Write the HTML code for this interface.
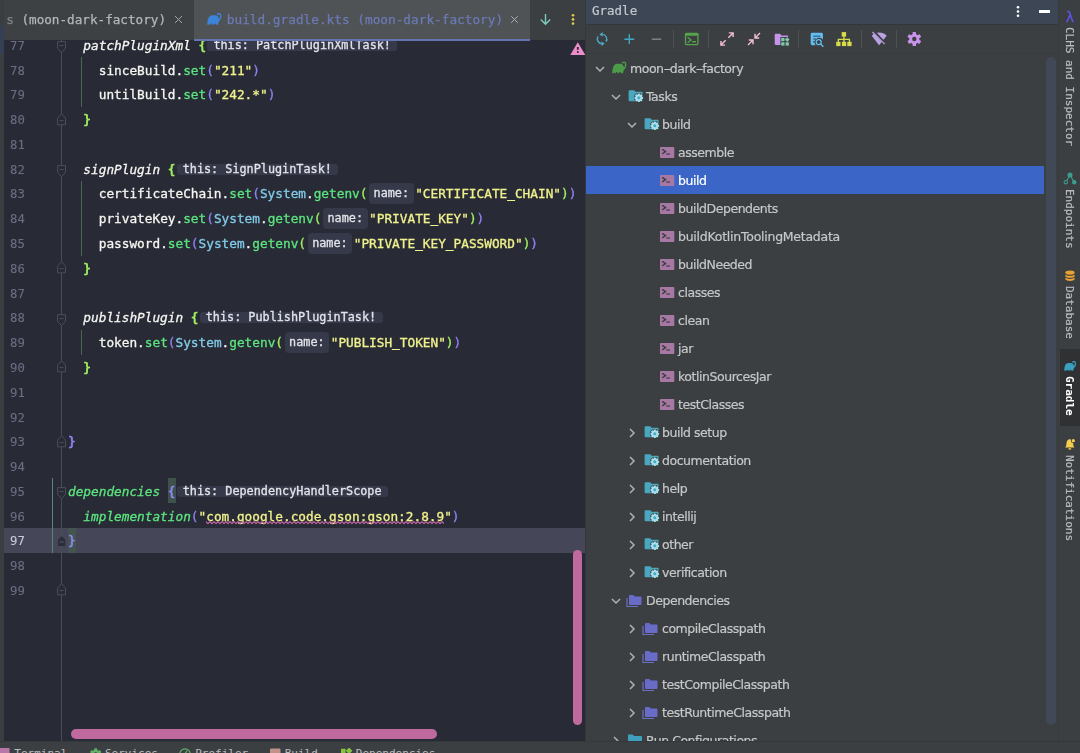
<!DOCTYPE html>
<html lang="en">
<head>
<meta charset="utf-8">
<title>build.gradle.kts (moon-dark-factory)</title>
<style>
*{box-sizing:border-box;margin:0;padding:0}
html,body{width:1080px;height:753px;overflow:hidden;background:#282a36}
body{position:relative;font-family:"DejaVu Sans Mono","Liberation Mono",monospace}
.abs{position:absolute}
#lstrip{left:0;top:0;width:4.2px;height:741px;background:#3b3e40}
#lsel{left:0;top:24.5px;width:3.5px;height:29px;background:#353f54;border-radius:0 3px 3px 0}
#tabs{will-change:transform;left:4px;top:0;width:582px;height:40px;background:#3c3f41}
.tab{-webkit-text-stroke:0.25px;position:absolute;top:0;height:40px;font-size:12.75px;line-height:40px;white-space:pre}
#tab1{left:0;width:190px;background:#3e4143;color:#b3b7bb}
#tab1>span{position:absolute;left:2.2px;top:0;font-size:12.65px}
#tab2{left:190px;width:335.5px;height:39px;background:#4f5355;color:#6b7ab5}
#tab2 span{position:absolute;left:32.8px;top:0.2px}
#tabul{left:194px;top:38.8px;width:335.5px;height:2px;background:#6573b1}
#code{will-change:transform;left:0;top:0;width:586px;height:741px;clip-path:inset(40.8px 0 0 0)}
.ln{-webkit-text-stroke:0.1px;position:absolute;left:10px;width:20px;height:25px;line-height:25px;font-size:12.3px;color:#6b6e82;white-space:pre}
.ln.cur{color:#c9cbd6}
.cl{-webkit-text-stroke:0.3px;position:absolute;left:68px;height:25px;line-height:25px;font-size:12.75px;white-space:pre;color:#f8f8f2}
.i{font-style:italic}
.br{-webkit-text-stroke:0.7px}
.w{color:#f6f6f1}.g{color:#5ce57f}.y{color:#f0f28c}.p{color:#8e84f4}.c{color:#82cbe8}.l{color:#a0f060}
.hint{display:inline-block;position:relative;top:-1.2px;height:21px;line-height:21px;font-size:11.8px;color:#e3e4ea;background:#363949;border-radius:4px;padding:0 4.6px;margin:0 1.5px;vertical-align:middle}
.hint.flat{height:11.6px;line-height:10.6px;border-radius:3px;padding:0 6.5px 0 6px;margin:0 0 0 1.2px;top:-1.2px}
.sq{text-decoration:underline wavy #c4508e 1px;text-underline-offset:2.5px}
.mb{background:#3e514b;display:inline-block;height:24.77px}
.mb2{background:#44554f;display:inline-block;height:24.77px}
#curline{left:4px;top:528px;width:582px;height:24.8px;background:#454759}
.foldline{left:61px;top:40px;width:1px;height:701px;background:#494b58}
.guide{width:1px;background:#4a6650}
#vcs{left:52px;top:478.4px;width:1.2px;height:74.4px;background:#5f8474}
.fm{position:absolute;left:57px}
#vsb{left:573.1px;top:550.4px;width:9px;height:174.2px;border-radius:4.5px;background:#c0699f}
#hsb{left:70.5px;top:729px;width:366px;height:9.6px;border-radius:5px;background:#c0699f}
#gradlebg{left:586px;top:0;width:473px;height:741px;background:#3c3f41}
#gradle{will-change:transform;left:586px;top:0;width:473px;height:741px;overflow:hidden}
#ghead{-webkit-text-stroke:0.2px;left:0;top:0;width:473px;height:23.5px;background:#3d4654;color:#c5c9ce;font-size:12.5px;line-height:22px;padding-left:6px}
#gline{left:0;top:23.5px;width:473px;height:1px;background:#34373a}
#gline2{left:0;top:53px;width:473px;height:1px;background:#393c3e}
.tsep{position:absolute;top:30px;width:1px;height:18px;background:#4e5153}
.tb{position:absolute}
.row{position:absolute;left:0;width:458px;height:28px}
.row.sel{background:#3b65c6}
.row .arr{position:absolute;top:9.5px}
.row .ti{position:absolute;top:50%;transform:translateY(-50%)}
.tt{-webkit-text-stroke:0.2px;position:absolute;top:0.5px;line-height:28px;font-family:"DejaVu Sans","Liberation Sans",sans-serif;font-size:12.5px;letter-spacing:-0.45px;color:#c6c8ca;white-space:pre}
.row.sel .tt{color:#fff}
.hy{display:inline-block;transform:scaleX(1.8);margin:0 1.1px}
#tsb{left:460px;top:56.5px;width:9.6px;height:668px;border-radius:5px;background:#414957}
#rstripebg{left:1058px;top:0;width:22px;height:741px;background:#3c3f41;border-left:1px solid #383b3d}
#rstripe{will-change:transform;left:1059.5px;top:0;width:20.5px;height:741px}
#rsel{left:0;top:349px;width:21px;height:76.5px;background:#2f3133}
.vt{-webkit-text-stroke:0.2px;position:absolute;left:-1.1px;width:21px;writing-mode:vertical-rl;font-size:11px;color:#b9bcc0;white-space:pre;line-height:21px}
.si{position:absolute}
#bottom{left:0;top:741px;width:1080px;height:12px;background:#3c3f41;border-top:1px solid #35383a;overflow:hidden}
.bt{position:absolute;top:5.4px;font-size:11px;line-height:14px;color:#b9bcc0;white-space:pre}
.bi{position:absolute;top:6px}
</style>
</head>
<body>
<svg width="0" height="0" style="position:absolute">
<defs>
<g id="i-gradle"><path d="M0.300 11.800C0.200 9 0.700 6 1.900 4.200C2.700 2.900 4 2.300 6 2.300H8C10 2.300 11.200 3.200 11.700 5L12.400 7.600C12 9 11.200 9.600 11.100 11.800H8.900C8.900 10.200 7.100 10.200 7.100 11.800H5.700C5.700 10.200 3.900 10.200 3.900 11.800H3.100C3.100 10.600 2 10.600 2 11.800Z"/><path d="M11.300 7.800C13.200 6.300 14 3.800 13.500 1.900C13.100 0.300 11.200 0.100 10.600 1.400" fill="none" stroke="currentColor" stroke-width="1.500" stroke-linecap="round"/></g>
<g id="i-tfolder"><path d="M0.600 2.400c0-.7.500-1.200 1.200-1.200H5.600c.500 0 .900.200 1.200.600l.800 1H13.500c.700 0 1.200.500 1.200 1.200V11.100c0 .700-.500 1.200-1.200 1.200H1.800c-.700 0-1.200-.500-1.200-1.200z" fill="#49a8c0"/><g transform="translate(10.800 8.800)"><circle r="4.900" fill="#3c3f41"/><g fill="#a3e1ee"><rect x="-1.100" y="-4.300" width="2.200" height="8.600" rx="0.300" transform="rotate(0)"/><rect x="-1.100" y="-4.300" width="2.200" height="8.600" rx="0.300" transform="rotate(45)"/><rect x="-1.100" y="-4.300" width="2.200" height="8.600" rx="0.300" transform="rotate(90)"/><rect x="-1.100" y="-4.300" width="2.200" height="8.600" rx="0.300" transform="rotate(135)"/><circle r="3.300"/></g><circle r="1.500" fill="#49a8c0"/></g></g>
<g id="i-task"><rect x="0" y="0" width="14.300" height="11.100" rx="0.800" fill="#a878a4"/><path d="M2.200 2.300L5.600 4.600L2.200 6.900" fill="none" stroke="#3c3f41" stroke-width="1.400"/><rect x="6.200" y="6.400" width="3.700" height="1.200" fill="#3c3f41"/></g>
<g id="i-lib"><path d="M1 4v8.500h11" fill="none" stroke="#6a6fc4" stroke-width="1.200"/><path d="M3 2c0-.6.400-1 1-1h3.300l1.300 1.500H14.500c.6 0 1 .4 1 1V10c0 .6-.4 1-1 1H4c-.6 0-1-.4-1-1z" fill="#686cc6"/></g>
<g id="i-runcfg"><path d="M1 2.500c0-.6.400-1 1-1h3.600l1.500 1.500H14c.6 0 1 .4 1 1V11c0 .6-.4 1-1 1H2c-.6 0-1-.4-1-1z" fill="#3f9fbc"/></g>
</defs>
</svg>

<div id="lstrip" class="abs"></div>
<div id="lsel" class="abs"></div>
<div id="curline" class="abs"></div>
<div class="foldline abs"></div>
<div id="vcs" class="abs"></div>
<div id="code" class="abs">
<svg class="fm" style="top:41.10px" width="10" height="13" viewBox="0 0 10 13"><path d="M0.600 0.600H8.500V7.200L4.550 11.800L0.600 7.200Z" fill="#282a36" stroke="#4c4e5b" stroke-width="1"/><path d="M2.500 4.600H6.600" stroke="#4c4e5b" stroke-width="1"/></svg>
<svg class="fm" style="top:164.95px" width="10" height="13" viewBox="0 0 10 13"><path d="M0.600 0.600H8.500V7.200L4.550 11.800L0.600 7.200Z" fill="#282a36" stroke="#4c4e5b" stroke-width="1"/><path d="M2.500 4.600H6.600" stroke="#4c4e5b" stroke-width="1"/></svg>
<svg class="fm" style="top:313.57px" width="10" height="13" viewBox="0 0 10 13"><path d="M0.600 0.600H8.500V7.200L4.550 11.800L0.600 7.200Z" fill="#282a36" stroke="#4c4e5b" stroke-width="1"/><path d="M2.500 4.600H6.600" stroke="#4c4e5b" stroke-width="1"/></svg>
<svg class="fm" style="top:486.96px" width="10" height="13" viewBox="0 0 10 13"><path d="M0.600 0.600H8.500V7.200L4.550 11.800L0.600 7.200Z" fill="#282a36" stroke="#4c4e5b" stroke-width="1"/><path d="M2.500 4.600H6.600" stroke="#4c4e5b" stroke-width="1"/></svg>
<svg class="fm" style="top:112.51px" width="10" height="13" viewBox="0 0 10 13"><path d="M0.600 11.800H8.500V5.200L4.550 0.600L0.600 5.200Z" fill="#282a36" stroke="#4c4e5b" stroke-width="1"/><path d="M2.500 7.600H6.600" stroke="#4c4e5b" stroke-width="1"/></svg>
<svg class="fm" style="top:261.13px" width="10" height="13" viewBox="0 0 10 13"><path d="M0.600 11.800H8.500V5.200L4.550 0.600L0.600 5.200Z" fill="#282a36" stroke="#4c4e5b" stroke-width="1"/><path d="M2.500 7.600H6.600" stroke="#4c4e5b" stroke-width="1"/></svg>
<svg class="fm" style="top:360.21px" width="10" height="13" viewBox="0 0 10 13"><path d="M0.600 11.800H8.500V5.200L4.550 0.600L0.600 5.200Z" fill="#282a36" stroke="#4c4e5b" stroke-width="1"/><path d="M2.500 7.600H6.600" stroke="#4c4e5b" stroke-width="1"/></svg>
<svg class="fm" style="top:434.52px" width="10" height="13" viewBox="0 0 10 13"><path d="M0.600 11.800H8.500V5.200L4.550 0.600L0.600 5.200Z" fill="#282a36" stroke="#4c4e5b" stroke-width="1"/><path d="M2.500 7.600H6.600" stroke="#4c4e5b" stroke-width="1"/></svg>
<svg class="fm" style="top:583.14px" width="10" height="13" viewBox="0 0 10 13"><path d="M0.600 11.800H8.500V5.200L4.550 0.600L0.600 5.200Z" fill="#282a36" stroke="#4c4e5b" stroke-width="1"/><path d="M2.500 7.600H6.600" stroke="#4c4e5b" stroke-width="1"/></svg>
<svg class="fm" style="top:534.50px" width="10" height="13" viewBox="0 0 10 13"><path d="M1 10.900H8.300V5L4.650 1L1 5Z" fill="#2b2d39"/><path d="M2.400 7H6.900" stroke="#555766" stroke-width="1"/></svg>
<div class="guide abs" style="left:81px;top:57.38px;height:49.54px"></div>
<div class="guide abs" style="left:81px;top:181.24px;height:74.31px"></div>
<div class="guide abs" style="left:81px;top:329.86px;height:24.77px"></div>
<div class="abs" style="left:167.8px;top:478.48px;width:8.1px;height:24.77px;background:#3e514b"></div>
<div class="abs" style="left:67.9px;top:528.01px;width:8px;height:24.77px;background:#44554f"></div>
<div class="ln" style="top:34.00px">77</div>
<div class="cl" style="top:33.00px">  <span class="w i">patchPluginXml</span> <span class="l br">{</span><span class="hint flat">this: PatchPluginXmlTask!</span></div>
<div class="ln" style="top:59.00px">78</div>
<div class="cl" style="top:58.00px">    <span class="w">sinceBuild.</span><span class="g">set</span><span class="p">(</span><span class="y">"211"</span><span class="p">)</span></div>
<div class="ln" style="top:83.00px">79</div>
<div class="cl" style="top:82.00px">    <span class="w">untilBuild.</span><span class="g">set</span><span class="p">(</span><span class="y">"242.*"</span><span class="p">)</span></div>
<div class="ln" style="top:108.00px">80</div>
<div class="cl" style="top:107.00px">  <span class="l br">}</span></div>
<div class="ln" style="top:133.00px">81</div>
<div class="ln" style="top:158.00px">82</div>
<div class="cl" style="top:157.00px">  <span class="w i">signPlugin</span> <span class="l br">{</span><span class="hint flat">this: SignPluginTask!</span></div>
<div class="ln" style="top:182.00px">83</div>
<div class="cl" style="top:181.00px">    <span class="w">certificateChain.</span><span class="g">set</span><span class="p">(</span><span class="c">System</span><span class="w">.</span><span class="g">getenv</span><span class="l">(</span><span class="hint">name:</span><span class="y">"CERTIFICATE_CHAIN"</span><span class="l">)</span><span class="p">)</span></div>
<div class="ln" style="top:207.00px">84</div>
<div class="cl" style="top:206.00px">    <span class="w">privateKey.</span><span class="g">set</span><span class="p">(</span><span class="c">System</span><span class="w">.</span><span class="g">getenv</span><span class="l">(</span><span class="hint">name:</span><span class="y">"PRIVATE_KEY"</span><span class="l">)</span><span class="p">)</span></div>
<div class="ln" style="top:232.00px">85</div>
<div class="cl" style="top:231.00px">    <span class="w">password.</span><span class="g">set</span><span class="p">(</span><span class="c">System</span><span class="w">.</span><span class="g">getenv</span><span class="l">(</span><span class="hint">name:</span><span class="y">"PRIVATE_KEY_PASSWORD"</span><span class="l">)</span><span class="p">)</span></div>
<div class="ln" style="top:257.00px">86</div>
<div class="cl" style="top:256.00px">  <span class="l br">}</span></div>
<div class="ln" style="top:282.00px">87</div>
<div class="ln" style="top:306.00px">88</div>
<div class="cl" style="top:305.00px">  <span class="w i">publishPlugin</span> <span class="l br">{</span><span class="hint flat">this: PublishPluginTask!</span></div>
<div class="ln" style="top:331.00px">89</div>
<div class="cl" style="top:330.00px">    <span class="w">token.</span><span class="g">set</span><span class="p">(</span><span class="c">System</span><span class="w">.</span><span class="g">getenv</span><span class="l">(</span><span class="hint">name:</span><span class="y">"PUBLISH_TOKEN"</span><span class="l">)</span><span class="p">)</span></div>
<div class="ln" style="top:356.00px">90</div>
<div class="cl" style="top:355.00px">  <span class="l br">}</span></div>
<div class="ln" style="top:381.00px">91</div>
<div class="ln" style="top:406.00px">92</div>
<div class="ln" style="top:430.00px">93</div>
<div class="cl" style="top:429.00px"><span class="p br">}</span></div>
<div class="ln" style="top:455.00px">94</div>
<div class="ln" style="top:480.00px">95</div>
<div class="cl" style="top:479.00px"><span class="g i">dependencies</span> <span class="p br">{</span><span class="hint flat">this: DependencyHandlerScope</span></div>
<div class="ln" style="top:505.00px">96</div>
<div class="cl" style="top:504.00px">  <span class="g i">implementation</span><span class="p">(</span><span class="y">"</span><span class="y">com.google.code.gson:gson:2.8.9</span><span class="y">"</span><span class="p">)</span></div>
<div class="ln cur" style="top:529.00px">97</div>
<div class="cl" style="top:528.00px"><span class="p br">}</span></div>
<div class="ln" style="top:554.00px">98</div>
<div class="ln" style="top:579.00px">99</div>
<svg class="abs" style="left:206.2px;top:521.0px" width="238" height="4" viewBox="0 0 238 4"><polyline points="0.0,0.6 2.0,2.6 4.0,0.6 6.0,2.6 8.0,0.6 10.0,2.6 12.0,0.6 14.0,2.6 16.0,0.6 18.0,2.6 20.0,0.6 22.0,2.6 24.0,0.6 26.0,2.6 28.0,0.6 30.0,2.6 32.0,0.6 34.0,2.6 36.0,0.6 38.0,2.6 40.0,0.6 42.0,2.6 44.0,0.6 46.0,2.6 48.0,0.6 50.0,2.6 52.0,0.6 54.0,2.6 56.0,0.6 58.0,2.6 60.0,0.6 62.0,2.6 64.0,0.6 66.0,2.6 68.0,0.6 70.0,2.6 72.0,0.6 74.0,2.6 76.0,0.6 78.0,2.6 80.0,0.6 82.0,2.6 84.0,0.6 86.0,2.6 88.0,0.6 90.0,2.6 92.0,0.6 94.0,2.6 96.0,0.6 98.0,2.6 100.0,0.6 102.0,2.6 104.0,0.6 106.0,2.6 108.0,0.6 110.0,2.6 112.0,0.6 114.0,2.6 116.0,0.6 118.0,2.6 120.0,0.6 122.0,2.6 124.0,0.6 126.0,2.6 128.0,0.6 130.0,2.6 132.0,0.6 134.0,2.6 136.0,0.6 138.0,2.6 140.0,0.6 142.0,2.6 144.0,0.6 146.0,2.6 148.0,0.6 150.0,2.6 152.0,0.6 154.0,2.6 156.0,0.6 158.0,2.6 160.0,0.6 162.0,2.6 164.0,0.6 166.0,2.6 168.0,0.6 170.0,2.6 172.0,0.6 174.0,2.6 176.0,0.6 178.0,2.6 180.0,0.6 182.0,2.6 184.0,0.6 186.0,2.6 188.0,0.6 190.0,2.6 192.0,0.6 194.0,2.6 196.0,0.6 198.0,2.6 200.0,0.6 202.0,2.6 204.0,0.6 206.0,2.6 208.0,0.6 210.0,2.6 212.0,0.6 214.0,2.6 216.0,0.6 218.0,2.6 220.0,0.6 222.0,2.6 224.0,0.6 226.0,2.6 228.0,0.6 230.0,2.6 232.0,0.6 234.0,2.6 236.0,0.6 238.0,2.6" fill="none" stroke="#cd6aac" stroke-width="1.1" stroke-linejoin="round"/></svg>
</div>
<div id="tabs" class="abs">
  <div id="tab1" class="tab"><span><span style="opacity:.55">s</span> (moon-dark-factory)</span>
    <svg class="abs" style="left:169.800px;top:15px" width="9" height="9" viewBox="0 0 9 9"><path d="M1 1L8 8M8 1L1 8" stroke="#a1a5a9" stroke-width="1" fill="none"/></svg>
  </div>
  <div id="tab2" class="tab">
    <svg class="abs" style="left:12.5px;top:13.2px;color:#3b84d9" width="15" height="13" viewBox="0 0 15 13"><use href="#i-gradle" fill="#3b84d9"/></svg>
    <span>build.gradle.kts (moon-dark-factory)</span>
    <svg class="abs" style="left:316px;top:14.800px" width="9" height="9" viewBox="0 0 9 9"><path d="M1.300 1.300L7.700 7.700M7.700 1.300L1.300 7.700" stroke="#aeb2b6" stroke-width="1" fill="none"/></svg>
  </div>
  <svg class="abs" style="left:535px;top:13px" width="13" height="13" viewBox="0 0 13 13"><path d="M6.500 1V11M1.800 6.500L6.500 11.200L11.200 6.500" stroke="#7accbc" stroke-width="1.400" fill="none"/></svg>
  <svg class="abs" style="left:566px;top:13px" width="6" height="13" viewBox="0 0 6 13"><circle cx="3" cy="2.200" r="1.300" fill="#e6cf45"/><circle cx="3" cy="6.400" r="1.300" fill="#e6cf45"/><circle cx="3" cy="10.600" r="1.300" fill="#e6cf45"/></svg>
</div>
<div id="tabul" class="abs"></div>
<svg class="abs" style="left:569.500px;top:42px" width="16" height="14" viewBox="0 0 16 14"><path d="M7.800 0.200L15.300 13H0.300Z" fill="#ee8ccc"/><path d="M7.800 5V7.800" stroke="#2d2530" stroke-width="1.800"/><rect x="6.900" y="9.200" width="1.800" height="1.600" fill="#2d2530"/></svg>
<div class="abs" style="left:585.2px;top:0;width:1px;height:741px;background:#34373b"></div>
<div id="vsb" class="abs"></div>
<div id="hsb" class="abs"></div>

<div id="gradlebg" class="abs"></div>
<div id="gradle" class="abs">
  <div id="ghead" class="abs">Gradle</div>
  <svg class="abs" style="left:429px;top:5px" width="6" height="13" viewBox="0 0 6 13"><circle cx="3" cy="2.300" r="1.300" fill="#fff"/><circle cx="3" cy="6.500" r="1.300" fill="#fff"/><circle cx="3" cy="10.700" r="1.300" fill="#fff"/></svg>
  <div class="abs" style="left:453px;top:9.700px;width:11.200px;height:3.200px;background:#fff;border-radius:0.500px"></div>
  <div id="gline" class="abs"></div>
  <div id="gline2" class="abs"></div>
<svg class="abs" style="left:8.0px;top:31.0px" width="16" height="16" viewBox="0 0 16 16"><g fill="none" stroke="#4aa9c3" stroke-width="1.4"><path d="M12 10.700 A4.700 4.700 0 0 0 8.300 3.400"/><path d="M4.100 5.400 A4.700 4.700 0 0 0 7.800 12.700"/></g><path d="M8.600 1V5.800L5.400 3.400Z M7.500 10.300V15.100L10.700 12.700Z" fill="#4aa9c3"/></svg>
<svg class="abs" style="left:38.0px;top:34.0px" width="11" height="11" viewBox="0 0 11 11"><path d="M5.3 0.3V10.1M0.4 5.2H10.2" stroke="#3fa8c7" stroke-width="1.4" fill="none"/></svg>
<svg class="abs" style="left:65.0px;top:37.0px" width="11" height="4" viewBox="0 0 11 4"><path d="M0.8 2.2H10.2" stroke="#7b7e80" stroke-width="1.6" fill="none"/></svg>
<div class="tsep" style="left:122.3px"></div>
<svg class="abs" style="left:98.0px;top:32.0px" width="16" height="14" viewBox="0 0 16 14"><rect x="1.5" y="1.5" width="12.4" height="11.1" rx="1" fill="none" stroke="#56a34d" stroke-width="1.3"/><rect x="1" y="1" width="13.4" height="2.8" rx="0.8" fill="#56a34d"/><path d="M3.6 5.2L7 8L3.6 10.8" fill="none" stroke="#56a34d" stroke-width="1.3"/><rect x="8.1" y="9" width="3.9" height="1.4" fill="#56a34d"/></svg>
<div class="tsep" style="left:122.3px"></div>
<div class="tsep" style="left:87.3px"></div>
<svg class="abs" style="left:134.0px;top:32.0px" width="14" height="14" viewBox="0 0 14 14"><path d="M8.900 0.900H13.100V5.100M13.100 0.900L8.300 5.700M0.900 8.900V13.100H5.100M0.900 13.100L5.700 8.300" stroke="#f3bfd5" stroke-width="1.400" fill="none"/></svg>
<svg class="abs" style="left:161.0px;top:32.0px" width="14" height="14" viewBox="0 0 14 14"><path d="M8 1.800V6H12.200M8 6L13 1M1.800 8H6V12.200M6 8L1 13" stroke="#f3bfd5" stroke-width="1.400" fill="none"/></svg>
<svg class="abs" style="left:188.0px;top:33.0px" width="16" height="14" viewBox="0 0 16 14"><path d="M0.7 2c0-.7.5-1.200 1.200-1.200H5.500c.5 0 .9.200 1.200.6l.7 1H13c.7 0 1.200.5 1.200 1.200V10.700c0 .7-.5 1.200-1.200 1.200H1.900c-.7 0-1.200-.5-1.200-1.200z" fill="#c494ea"/><rect x="6.400" y="4" width="9.600" height="9.600" fill="#3c3f41"/><g fill="#7ec9a9"><rect x="7.200" y="4.900" width="3.300" height="3.300"/><rect x="7.200" y="9.300" width="3.300" height="3.300"/><rect x="11.600" y="9.300" width="3.300" height="3.300"/><path d="M13.250 4.200L15.600 6.550L13.250 8.900L10.900 6.550Z"/></g></svg>
<div class="tsep" style="left:212.300px"></div>
<svg class="abs" style="left:224.0px;top:32.0px" width="15" height="16" viewBox="0 0 15 16"><path d="M0.700 2.200c0-.8.600-1.400 1.400-1.400H11.500c.8 0 1.400.6 1.400 1.400V7.500A4.200 4.200 0 0 0 5.500 13.200H2.100c-.8 0-1.400-.6-1.400-1.400z" fill="#62bdf0"/><path d="M3.200 4.200H10.400" stroke="#2f5f7c" stroke-width="1.200"/><path d="M3.200 7H6M3.200 9.800H5" stroke="#3c3f41" stroke-width="1.200"/><circle cx="8.700" cy="10.100" r="2.500" fill="#3c3f41" stroke="#62bdf0" stroke-width="1.300"/><path d="M10.600 12L13.300 14.700" stroke="#62bdf0" stroke-width="1.500"/></svg>
<svg class="abs" style="left:250.0px;top:32.0px" width="16" height="15" viewBox="0 0 16 15"><g fill="#d7db4a"><rect x="5.700" y="0.100" width="4.400" height="4.500"/><rect x="0.200" y="9.800" width="4.300" height="4.300"/><rect x="5.900" y="9.800" width="4.300" height="4.300"/><rect x="11.300" y="9.800" width="4.300" height="4.300"/></g><path d="M7.950 4V10M2.350 10V7.300H13.450V10" fill="none" stroke="#d7db4a" stroke-width="1.300"/></svg>
<div class="tsep" style="left:274.600px"></div>
<svg class="abs" style="left:285.0px;top:31.0px" width="17" height="16" viewBox="0 0 17 16"><path d="M8.100 14.300L0.700 4.700A10.500 10.500 0 0 1 15.700 4.700Z" fill="#b9a3e3"/><path d="M2.600 0.300L15.200 13.600" stroke="#3c3f41" stroke-width="2.600"/><path d="M1.500 1L13.700 13.200" stroke="#b9a3e3" stroke-width="1.200"/></svg>
<div class="tsep" style="left:310.100px"></div>
<svg class="abs" style="left:321.0px;top:32.0px" width="15" height="15" viewBox="0 0 15 15"><g transform="translate(7.300 7.050)" fill="#c993eb"><rect x="-1.700" y="-7" width="3.400" height="14" rx="0.600" transform="rotate(0)"/><rect x="-1.700" y="-7" width="3.400" height="14" rx="0.600" transform="rotate(60)"/><rect x="-1.700" y="-7" width="3.400" height="14" rx="0.600" transform="rotate(120)"/><circle r="5.100"/><circle r="2.200" fill="#3c3f41"/></g></svg>
<div class="row" style="top:54.3px"><svg class="arr" style="left:9px" width="10" height="10" viewBox="0 0 10 10"><path d="M1 3 L5 7 L9 3" fill="none" stroke="#afb1b3" stroke-width="1.5"/></svg><svg class="ti" style="left:25.5px;margin-top:-0.3px" width="15" height="13" viewBox="0 0 15 13" color="#4b9b49"><use href="#i-gradle" fill="#4b9b49"/></svg><span class="tt" style="left:44px">moon<span class="hy">-</span>dark<span class="hy">-</span>factory</span></div>
<div class="row" style="top:82.3px"><svg class="arr" style="left:25px" width="10" height="10" viewBox="0 0 10 10"><path d="M1 3 L5 7 L9 3" fill="none" stroke="#afb1b3" stroke-width="1.5"/></svg><svg class="ti" style="left:41.5px;margin-top:0.2px" width="16" height="14" viewBox="0 0 16 14"><use href="#i-tfolder"/></svg><span class="tt" style="left:60px">Tasks</span></div>
<div class="row" style="top:110.3px"><svg class="arr" style="left:41px" width="10" height="10" viewBox="0 0 10 10"><path d="M1 3 L5 7 L9 3" fill="none" stroke="#afb1b3" stroke-width="1.5"/></svg><svg class="ti" style="left:57.5px;margin-top:0.2px" width="16" height="14" viewBox="0 0 16 14"><use href="#i-tfolder"/></svg><span class="tt" style="left:76px">build</span></div>
<div class="row" style="top:138.3px"><svg class="ti" style="left:73.89999999999998px;margin-top:0.9px" width="15" height="12" viewBox="0 0 15 12"><use href="#i-task"/></svg><span class="tt" style="left:92px">assemble</span></div>
<div class="row sel" style="top:166.3px"><svg class="ti" style="left:73.89999999999998px;margin-top:0.9px" width="15" height="12" viewBox="0 0 15 12"><use href="#i-task"/></svg><span class="tt" style="left:92px">build</span></div>
<div class="row" style="top:194.3px"><svg class="ti" style="left:73.89999999999998px;margin-top:0.9px" width="15" height="12" viewBox="0 0 15 12"><use href="#i-task"/></svg><span class="tt" style="left:92px">buildDependents</span></div>
<div class="row" style="top:222.3px"><svg class="ti" style="left:73.89999999999998px;margin-top:0.9px" width="15" height="12" viewBox="0 0 15 12"><use href="#i-task"/></svg><span class="tt" style="left:92px;letter-spacing:-0.25px">buildKotlinToolingMetadata</span></div>
<div class="row" style="top:250.3px"><svg class="ti" style="left:73.89999999999998px;margin-top:0.9px" width="15" height="12" viewBox="0 0 15 12"><use href="#i-task"/></svg><span class="tt" style="left:92px">buildNeeded</span></div>
<div class="row" style="top:278.3px"><svg class="ti" style="left:73.89999999999998px;margin-top:0.9px" width="15" height="12" viewBox="0 0 15 12"><use href="#i-task"/></svg><span class="tt" style="left:92px">classes</span></div>
<div class="row" style="top:306.3px"><svg class="ti" style="left:73.89999999999998px;margin-top:0.9px" width="15" height="12" viewBox="0 0 15 12"><use href="#i-task"/></svg><span class="tt" style="left:92px">clean</span></div>
<div class="row" style="top:334.3px"><svg class="ti" style="left:73.89999999999998px;margin-top:0.9px" width="15" height="12" viewBox="0 0 15 12"><use href="#i-task"/></svg><span class="tt" style="left:92px">jar</span></div>
<div class="row" style="top:362.3px"><svg class="ti" style="left:73.89999999999998px;margin-top:0.9px" width="15" height="12" viewBox="0 0 15 12"><use href="#i-task"/></svg><span class="tt" style="left:92px">kotlinSourcesJar</span></div>
<div class="row" style="top:390.3px"><svg class="ti" style="left:73.89999999999998px;margin-top:0.9px" width="15" height="12" viewBox="0 0 15 12"><use href="#i-task"/></svg><span class="tt" style="left:92px">testClasses</span></div>
<div class="row" style="top:418.3px"><svg class="arr" style="left:41px" width="10" height="10" viewBox="0 0 10 10"><path d="M3 1 L7 5 L3 9" fill="none" stroke="#afb1b3" stroke-width="1.5"/></svg><svg class="ti" style="left:57.5px;margin-top:0.2px" width="16" height="14" viewBox="0 0 16 14"><use href="#i-tfolder"/></svg><span class="tt" style="left:76px">build setup</span></div>
<div class="row" style="top:446.3px"><svg class="arr" style="left:41px" width="10" height="10" viewBox="0 0 10 10"><path d="M3 1 L7 5 L3 9" fill="none" stroke="#afb1b3" stroke-width="1.5"/></svg><svg class="ti" style="left:57.5px;margin-top:0.2px" width="16" height="14" viewBox="0 0 16 14"><use href="#i-tfolder"/></svg><span class="tt" style="left:76px">documentation</span></div>
<div class="row" style="top:474.3px"><svg class="arr" style="left:41px" width="10" height="10" viewBox="0 0 10 10"><path d="M3 1 L7 5 L3 9" fill="none" stroke="#afb1b3" stroke-width="1.5"/></svg><svg class="ti" style="left:57.5px;margin-top:0.2px" width="16" height="14" viewBox="0 0 16 14"><use href="#i-tfolder"/></svg><span class="tt" style="left:76px">help</span></div>
<div class="row" style="top:502.3px"><svg class="arr" style="left:41px" width="10" height="10" viewBox="0 0 10 10"><path d="M3 1 L7 5 L3 9" fill="none" stroke="#afb1b3" stroke-width="1.5"/></svg><svg class="ti" style="left:57.5px;margin-top:0.2px" width="16" height="14" viewBox="0 0 16 14"><use href="#i-tfolder"/></svg><span class="tt" style="left:76px">intellij</span></div>
<div class="row" style="top:530.3px"><svg class="arr" style="left:41px" width="10" height="10" viewBox="0 0 10 10"><path d="M3 1 L7 5 L3 9" fill="none" stroke="#afb1b3" stroke-width="1.5"/></svg><svg class="ti" style="left:57.5px;margin-top:0.2px" width="16" height="14" viewBox="0 0 16 14"><use href="#i-tfolder"/></svg><span class="tt" style="left:76px">other</span></div>
<div class="row" style="top:558.3px"><svg class="arr" style="left:41px" width="10" height="10" viewBox="0 0 10 10"><path d="M3 1 L7 5 L3 9" fill="none" stroke="#afb1b3" stroke-width="1.5"/></svg><svg class="ti" style="left:57.5px;margin-top:0.2px" width="16" height="14" viewBox="0 0 16 14"><use href="#i-tfolder"/></svg><span class="tt" style="left:76px">verification</span></div>
<div class="row" style="top:586.3px"><svg class="arr" style="left:25px" width="10" height="10" viewBox="0 0 10 10"><path d="M1 3 L5 7 L9 3" fill="none" stroke="#afb1b3" stroke-width="1.5"/></svg><svg class="ti" style="left:41.5px;margin-left:-1.3px;margin-top:0.3px" width="16" height="14" viewBox="0 0 16 14"><use href="#i-lib"/></svg><span class="tt" style="left:60px">Dependencies</span></div>
<div class="row" style="top:614.3px"><svg class="arr" style="left:41px" width="10" height="10" viewBox="0 0 10 10"><path d="M3 1 L7 5 L3 9" fill="none" stroke="#afb1b3" stroke-width="1.5"/></svg><svg class="ti" style="left:57.5px;margin-left:-1.3px;margin-top:0.3px" width="16" height="14" viewBox="0 0 16 14"><use href="#i-lib"/></svg><span class="tt" style="left:76px">compileClasspath</span></div>
<div class="row" style="top:642.3px"><svg class="arr" style="left:41px" width="10" height="10" viewBox="0 0 10 10"><path d="M3 1 L7 5 L3 9" fill="none" stroke="#afb1b3" stroke-width="1.5"/></svg><svg class="ti" style="left:57.5px;margin-left:-1.3px;margin-top:0.3px" width="16" height="14" viewBox="0 0 16 14"><use href="#i-lib"/></svg><span class="tt" style="left:76px">runtimeClasspath</span></div>
<div class="row" style="top:670.3px"><svg class="arr" style="left:41px" width="10" height="10" viewBox="0 0 10 10"><path d="M3 1 L7 5 L3 9" fill="none" stroke="#afb1b3" stroke-width="1.5"/></svg><svg class="ti" style="left:57.5px;margin-left:-1.3px;margin-top:0.3px" width="16" height="14" viewBox="0 0 16 14"><use href="#i-lib"/></svg><span class="tt" style="left:76px">testCompileClasspath</span></div>
<div class="row" style="top:698.3px"><svg class="arr" style="left:41px" width="10" height="10" viewBox="0 0 10 10"><path d="M3 1 L7 5 L3 9" fill="none" stroke="#afb1b3" stroke-width="1.5"/></svg><svg class="ti" style="left:57.5px;margin-left:-1.3px;margin-top:0.3px" width="16" height="14" viewBox="0 0 16 14"><use href="#i-lib"/></svg><span class="tt" style="left:76px">testRuntimeClasspath</span></div>
<div class="row" style="top:726.3px"><svg class="arr" style="left:25px" width="10" height="10" viewBox="0 0 10 10"><path d="M3 1 L7 5 L3 9" fill="none" stroke="#afb1b3" stroke-width="1.5"/></svg><svg class="ti" style="left:41.5px;margin-left:-0.8px" width="16" height="14" viewBox="0 0 16 14"><use href="#i-runcfg"/></svg><span class="tt" style="left:60px">Run Configurations</span></div>
  <div id="tsb" class="abs"></div>
</div>
<div id="rstripebg" class="abs"></div>
<div id="rstripe" class="abs">
  <div id="rsel" class="abs"></div>
<div class="abs" style="left:5.8px;top:8.6px;width:10px;height:17px;font-family:'DejaVu Sans',sans-serif;font-size:14px;line-height:17px;color:#5f54e6;-webkit-text-stroke:0.3px">λ</div>
<div class="vt" style="top:27.3px">CLHS and Inspector</div>
<svg class="abs" style="left:2.7px;top:172.3px" width="14" height="13" viewBox="0 0 14 13"><path d="M7 3L2.800 10.200M7 3L11.200 10.200" stroke="#3c9d8c" stroke-width="1.200" fill="none"/><circle cx="7" cy="3" r="2.500" fill="#3c9d8c"/><circle cx="11.200" cy="10.200" r="2.200" fill="#3c9d8c"/><circle cx="2.800" cy="10.200" r="1.700" fill="#3c3f41" stroke="#3c9d8c" stroke-width="1.100"/></svg>
<div class="vt" style="top:189.4px">Endpoints</div>
<svg class="abs" style="left:5.0px;top:270.0px" width="10" height="12" viewBox="0 0 10 12"><g fill="#e9a233"><ellipse cx="5" cy="2.600" rx="4.600" ry="2.200"/><path d="M0.400 4.400c1 1.800 8.200 1.800 9.200 0v2c-1 1.800-8.200 1.800-9.200 0zM0.400 7.600c1 1.800 8.200 1.800 9.200 0v1.700c-1 2.300-8.200 2.300-9.200 0z"/></g></svg>
<div class="vt" style="top:286.2px">Database</div>
<svg class="abs" style="left:3.7px;top:361.0px" width="12.5" height="10.8" viewBox="0 0 15 13"><g style="color:#3b9fc2"><use href="#i-gradle" fill="#3b9fc2"/></g></svg>
<div class="vt" style="top:376px;color:#fff;font-weight:bold;-webkit-text-stroke:0">Gradle</div>
<svg class="abs" style="left:4.0px;top:437.8px" width="12" height="13" viewBox="0 0 12 13"><path d="M1 9.500c1.300-1 1.300-2.500 1.500-4.500C2.800 2.500 4 1.200 5.800 1.200S8.800 2.500 9.100 5c.2 2 .2 3.500 1.500 4.500z" fill="#f4cf4e"/><path d="M4.300 10.300h3a1.500 1.500 0 0 1-3 0z" fill="#f4cf4e"/><circle cx="9.300" cy="2.700" r="2.400" fill="#3c3f41"/><circle cx="9.300" cy="2.700" r="1.600" fill="#f4cf4e"/></svg>
<div class="vt" style="top:454.5px">Notifications</div>
</div>
<div id="bottom" class="abs">
<svg class="bi" style="left:-1px" width="11" height="10" viewBox="0 0 11 10"><rect x="0" y="0" width="10.600" height="10" rx="1" fill="#b778a8"/></svg>
<span class="bt" style="left:14.300px">Terminal</span>
<svg class="bi" style="left:89.5px" width="12" height="12" viewBox="0 0 12 12"><g transform="translate(5.700 6)" fill="#62b46a"><rect x="-1.400" y="-5.700" width="2.800" height="11.400" transform="rotate(0)"/><rect x="-1.400" y="-5.700" width="2.800" height="11.400" transform="rotate(60)"/><rect x="-1.400" y="-5.700" width="2.800" height="11.400" transform="rotate(120)"/><circle r="4.200"/><circle r="1.800" fill="#3c3f41"/></g></svg>
<span class="bt" style="left:105px">Services</span>
<svg class="bi" style="left:179px" width="12" height="12" viewBox="0 0 12 12"><circle cx="6" cy="6" r="5.200" fill="none" stroke="#62b46a" stroke-width="1.200"/><path d="M6 6L8 2.500" stroke="#62b46a" stroke-width="1.200"/></svg>
<span class="bt" style="left:195.200px">Profiler</span>
<svg class="bi" style="left:269.5px" width="11" height="10" viewBox="0 0 11 10"><rect x="0" y="0.500" width="10.500" height="9" rx="1.200" fill="#c0928a"/></svg>
<span class="bt" style="left:284.700px">Build</span>
<svg class="bi" style="left:341px" width="12" height="12" viewBox="0 0 12 12"><g fill="#86c440"><rect x="0" y="0.800" width="4.600" height="4.600"/><rect x="0" y="6.600" width="4.600" height="4.600"/><rect x="5.800" y="6.600" width="4.600" height="4.600"/><path d="M8.100 -0.500L11.400 2.800L8.100 6.100L4.800 2.800Z"/></g></svg>
<span class="bt" style="left:355.800px">Dependencies</span>
</div>
</body>
</html>
